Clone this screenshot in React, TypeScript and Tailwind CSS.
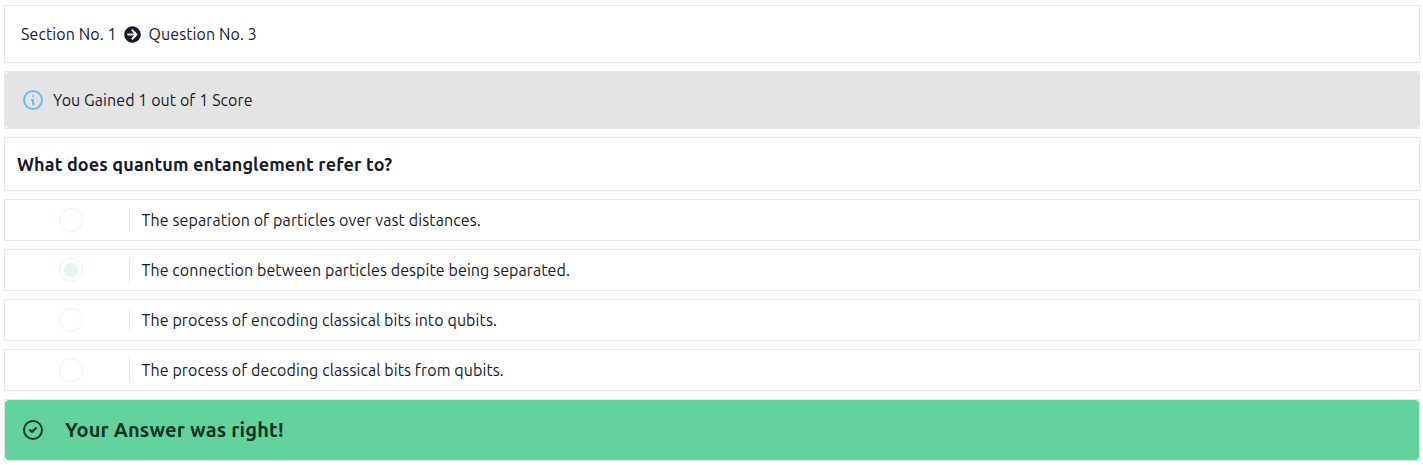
import { FaArrowCircleRight } from "react-icons/fa";

const options = [
  { text: "The separation of particles over vast distances.", checked: false, tracking: "tracking-[0.11px]" },
  { text: "The connection between particles despite being separated.", checked: true, tracking: "tracking-[0.085px]" },
  { text: "The process of encoding classical bits into qubits.", checked: false, tracking: "tracking-[0.095px]" },
  { text: "The process of decoding classical bits from qubits.", checked: false, tracking: "tracking-[0.095px]" },
];

function Radio({ checked }: { checked: boolean }) {
  return (
    <span
      role="radio"
      aria-checked={checked}
      className="flex size-6 items-center justify-center rounded-full border border-[#e3f4ec]"
    >
      {checked && <span className="size-3.5 rounded-full bg-[#e3f4ec]" />}
    </span>
  );
}

export default function App() {
  return (
    <main className="flex flex-col gap-2 bg-white px-1 pt-[5px] pr-[3px] font-['Ubuntu','Noto_Sans',sans-serif] text-base leading-6 text-[#181a2a]">
      <header className="flex h-[58px] items-center border border-[#e5e6e9] px-4">
        <span className="w-[103px] whitespace-nowrap tracking-[0.1px]">Section No. 1</span>
        <FaArrowCircleRight className="size-[17px] shrink-0" />
        <span className="ml-[7.5px] whitespace-nowrap tracking-[0.1px]">Question No. 3</span>
      </header>

      <div className="border border-[#e5e6e9]">
        <div className="flex h-14 items-center gap-2 rounded bg-[#e4e4e4] px-4">
          <svg className="size-6 shrink-0" viewBox="0 0 24 24" fill="none" stroke="#68bbf8" strokeWidth="2" strokeLinecap="round" strokeLinejoin="round">
            <path d="M13 16h-1v-4h-1m1-4h.01M21 12a9 9 0 11-18 0 9 9 0 0118 0z" />
          </svg>
          <span className="tracking-[0.08px]">You Gained 1 out of 1 Score</span>
        </div>
      </div>

      <div className="flex h-[54px] items-center border border-[#e5e6e9] px-3">
        <h1 className="text-lg font-bold tracking-[0.13px]">What does quantum entanglement refer to?</h1>
      </div>

      {options.map((option) => (
        <div key={option.text} className="flex h-[42px] items-center border border-[#e5e6e9]">
          <div className="flex w-[125px] items-center border-r border-[#e5e6e9] pl-[54px]">
            <Radio checked={option.checked} />
          </div>
          <span className={`pl-[11.5px] ${option.tracking}`}>{option.text}</span>
        </div>
      ))}

      <div className="border border-[#e5e6e9]">
        <div className="flex h-[60px] items-center gap-5 rounded bg-[#63d29d] px-4 text-[#0d3324]">
          <svg className="size-6 shrink-0" viewBox="0 0 24 24" fill="none" stroke="currentColor" strokeWidth="2" strokeLinecap="round" strokeLinejoin="round">
            <path d="M9 12l2 2 4-4m6 2a9 9 0 11-18 0 9 9 0 0118 0z" />
          </svg>
          <span className="text-xl font-bold tracking-[0.16px]">Your Answer was right!</span>
        </div>
      </div>
    </main>
  );
}
